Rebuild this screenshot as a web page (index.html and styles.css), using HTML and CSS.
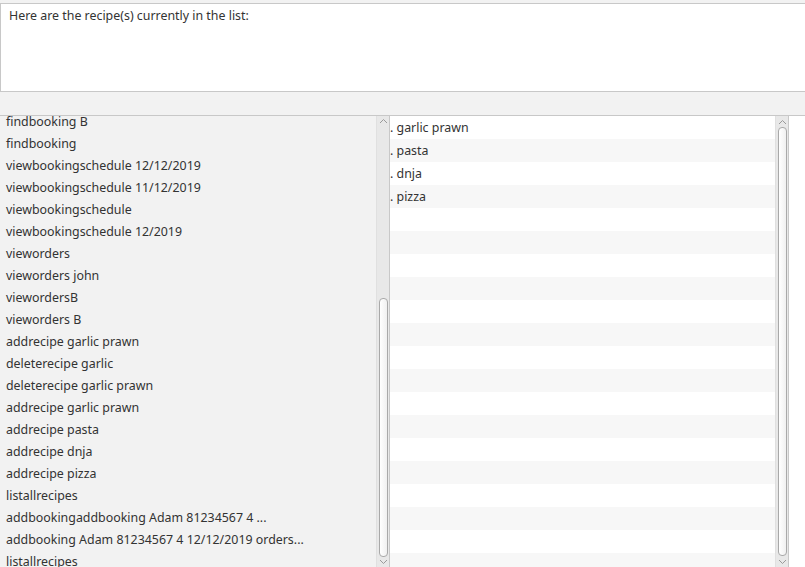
FILE: index.html
```
<!DOCTYPE html>
<html>
<head>
<meta charset="utf-8">
<link rel="stylesheet" href="styles.css">
</head>
<body>
<div class="app">
  <div class="result-box">
    <div class="result-text">Here are the recipe(s) currently in the list:</div>
  </div>
  <div class="spacer"></div>
  <div class="panels">
    <div class="panel left-panel">
      <div class="list history">
        <div class="list-inner">
          <div class="hrow">findbooking B</div>
          <div class="hrow">findbooking</div>
          <div class="hrow">viewbookingschedule 12/12/2019</div>
          <div class="hrow">viewbookingschedule 11/12/2019</div>
          <div class="hrow">viewbookingschedule</div>
          <div class="hrow">viewbookingschedule 12/2019</div>
          <div class="hrow">vieworders</div>
          <div class="hrow">vieworders john</div>
          <div class="hrow">viewordersB</div>
          <div class="hrow">vieworders B</div>
          <div class="hrow">addrecipe garlic prawn</div>
          <div class="hrow">deleterecipe garlic</div>
          <div class="hrow">deleterecipe garlic prawn</div>
          <div class="hrow">addrecipe garlic prawn</div>
          <div class="hrow">addrecipe pasta</div>
          <div class="hrow">addrecipe dnja</div>
          <div class="hrow">addrecipe pizza</div>
          <div class="hrow">listallrecipes</div>
          <div class="hrow">addbookingaddbooking Adam 81234567 4 ...</div>
          <div class="hrow">addbooking Adam 81234567 4 12/12/2019 orders...</div>
          <div class="hrow">listallrecipes</div>
        </div>
      </div>
      <div class="scrollbar">
        <div class="arrow up"><svg width="9" height="6" viewBox="0 0 9 6"><polyline points="1,5 4.5,1.5 8,5" fill="none" stroke="#9a9a9a" stroke-width="1"/></svg></div>
        <div class="track">
          <div class="thumb thumb-left"></div>
        </div>
        <div class="arrow down"><svg width="9" height="6" viewBox="0 0 9 6"><polyline points="1,1 4.5,4.5 8,1" fill="none" stroke="#9a9a9a" stroke-width="1"/></svg></div>
      </div>
    </div>
    <div class="panel right-panel">
      <div class="list recipes">
        <div class="rrow">. garlic prawn</div>
        <div class="rrow">. pasta</div>
        <div class="rrow">. dnja</div>
        <div class="rrow">. pizza</div>
        <div class="rrow"></div><div class="rrow"></div><div class="rrow"></div><div class="rrow"></div>
        <div class="rrow"></div><div class="rrow"></div><div class="rrow"></div><div class="rrow"></div>
        <div class="rrow"></div><div class="rrow"></div><div class="rrow"></div><div class="rrow"></div>
        <div class="rrow"></div><div class="rrow"></div><div class="rrow"></div><div class="rrow"></div>
      </div>
      <div class="scrollbar">
        <div class="arrow up"><svg width="9" height="6" viewBox="0 0 9 6"><polyline points="1,5 4.5,1.5 8,5" fill="none" stroke="#9a9a9a" stroke-width="1"/></svg></div>
        <div class="track">
          <div class="thumb thumb-right"></div>
        </div>
        <div class="arrow down"><svg width="9" height="6" viewBox="0 0 9 6"><polyline points="1,1 4.5,4.5 8,1" fill="none" stroke="#9a9a9a" stroke-width="1"/></svg></div>
      </div>
    </div>
    <div class="panel edge-panel"></div>
  </div>
</div>
</body>
</html>
```
FILE: styles.css
```
html, body {
  margin: 0;
  padding: 0;
}
body {
  background: #f2f2f2;
  font-family: "Noto Sans", "Open Sans", sans-serif;
  font-size: 12.4px;
  color: #333333;
  width: 805px;
  height: 567px;
  overflow: hidden;
}
.app {
  display: flex;
  flex-direction: column;
  height: 567px;
  padding-top: 3px;
  box-sizing: border-box;
}
.result-box {
  height: 89px;
  box-sizing: border-box;
  background: #ffffff;
  border: 1px solid #c8c8c8;
  border-right: none;
  padding: 3px 8px;
}
.result-text {
  line-height: 18px;
}
.spacer {
  height: 23px;
}
.panels {
  flex: 1;
  display: flex;
  border-top: 1px solid #c8c8c8;
  min-height: 0;
}
.panel {
  display: flex;
  min-height: 0;
}
.left-panel {
  width: 389px;
  background: #f2f2f2;
  border-right: 1px solid #c8c8c8;
}
.right-panel {
  width: 398px;
  background: #ffffff;
  border-right: 1px solid #c8c8c8;
}
.edge-panel {
  flex: 1;
  background: #ffffff;
}
.list {
  flex: 1;
  overflow: hidden;
}
.list-inner {
  margin-top: -5px;
}
.hrow {
  height: 22px;
  line-height: 22px;
  padding-left: 6px;
  white-space: nowrap;
}
.rrow {
  height: 23px;
  line-height: 23px;
  white-space: nowrap;
}
.rrow:nth-child(even) {
  background: #f7f7f7;
}
.scrollbar {
  width: 12px;
  background: #e8e8e8;
  border-left: 1px solid #e0e0e0;
  display: flex;
  flex-direction: column;
}
.arrow {
  height: 11px;
  display: flex;
  align-items: center;
  justify-content: center;
}
.track {
  flex: 1;
  display: flex;
  flex-direction: column;
  align-items: center;
}
.thumb {
  width: 9px;
  box-sizing: border-box;
  border: 1px solid #a9a9a9;
  border-radius: 4px;
  background: linear-gradient(to right, #ffffff, #f0f0f0);
}
.thumb-left {
  margin-top: 171px;
  height: 259px;
}
.thumb-right {
  flex: 1;
}
```
